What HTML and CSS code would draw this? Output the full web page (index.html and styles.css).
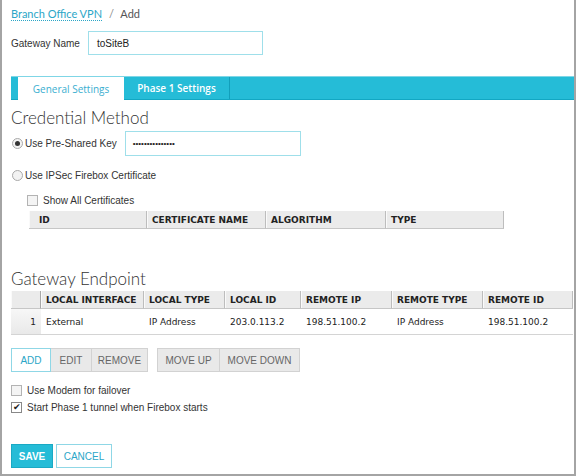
FILE: index.html
```html
<!DOCTYPE html>
<html lang="en">
<head>
    <meta charset="UTF-8">
    <title>Branch Office VPN / Add</title>
    <link rel="stylesheet" href="styles.css">
</head>
<body>
<div class="page">
    <div class="crumbs">
        <a class="crumb-link" href="#">Branch Office VPN</a>
        <span class="crumb-sep">/</span>
        <span>Add</span>
    </div>

    <div class="name-row">
        <span class="label">Gateway Name</span>
        <div class="text-box name-box">toSiteB</div>
    </div>

    <div class="tabs">
        <span class="tab-stub"></span>
        <span class="tab tab-active">General Settings</span>
        <span class="tab">Phase 1 Settings</span>
    </div>

    <h2 class="section-title">Credential Method</h2>

    <div class="radio-row psk-row">
        <span class="radio radio-on"></span>
        <span class="label">Use Pre-Shared Key</span>
        <div class="text-box key-box">•••••••••••••••</div>
    </div>

    <div class="radio-row cert-row">
        <span class="radio"></span>
        <span class="label">Use IPSec Firebox Certificate</span>
    </div>

    <div class="check-row show-certs">
        <span class="check"></span>
        <span class="label">Show All Certificates</span>
    </div>

    <div class="grid cert-grid">
        <div class="th">ID</div>
        <div class="th">CERTIFICATE NAME</div>
        <div class="th">ALGORITHM</div>
        <div class="th">TYPE</div>
    </div>

    <h2 class="section-title endpoint-title">Gateway Endpoint</h2>

    <div class="grid endpoint-grid">
        <div class="th th-blank"></div>
        <div class="th">LOCAL INTERFACE</div>
        <div class="th">LOCAL TYPE</div>
        <div class="th">LOCAL ID</div>
        <div class="th">REMOTE IP</div>
        <div class="th">REMOTE TYPE</div>
        <div class="th">REMOTE ID</div>

        <div class="td td-num">1</div>
        <div class="td">External</div>
        <div class="td">IP Address</div>
        <div class="td">203.0.113.2</div>
        <div class="td">198.51.100.2</div>
        <div class="td">IP Address</div>
        <div class="td">198.51.100.2</div>
    </div>

    <div class="toolbar">
        <div class="btn-group">
            <button class="btn btn-active btn-add">ADD</button>
            <button class="btn btn-edit">EDIT</button>
            <button class="btn btn-remove">REMOVE</button>
        </div>
        <div class="btn-group">
            <button class="btn btn-up">MOVE UP</button>
            <button class="btn btn-down">MOVE DOWN</button>
        </div>
    </div>

    <div class="check-row modem-row">
        <span class="check"></span>
        <span class="label">Use Modem for failover</span>
    </div>
    <div class="check-row start-row">
        <span class="check check-on">&#10004;</span>
        <span class="label">Start Phase 1 tunnel when Firebox starts</span>
    </div>

    <div class="actions">
        <button class="btn-save">SAVE</button>
        <button class="btn-cancel">CANCEL</button>
    </div>
</div>
</body>
</html>
```

FILE: styles.css
```css
/* Page frame */
body {
    margin: 0;
    padding: 0;
    font-family: "Liberation Sans", Arial, sans-serif;
    font-size: 10px;
    color: #333;
    background: #fff;
}

.page {
    width: 576px;
    height: 476px;
    box-sizing: border-box;
    border: 2px solid #a4a4a4;
    border-top: none;
    padding: 6px 0 0 9px;
}

.label {
    font-size: 10px;
    color: #333;
}

/* Breadcrumb */
.crumbs {
    height: 16px;
    line-height: 16px;
    font-family: Lato, "Open Sans", sans-serif;
    font-size: 11px;
    color: #555;
}

.crumb-link {
    color: #2ba6c7;
    text-decoration: none;
    border-bottom: 1px dotted #2ba6c7;
}

.crumb-sep {
    color: #888;
    margin: 0 4px;
}

/* Gateway name */
.name-row {
    display: flex;
    align-items: center;
    margin-top: 9px;
}

.text-box {
    box-sizing: border-box;
    border: 1px solid #9fdfea;
    background: #fff;
    padding: 0 8px;
    display: flex;
    align-items: center;
    font-size: 10px;
    color: #222;
}

.name-box {
    width: 175px;
    height: 24px;
    margin-left: 8px;
}

/* Tabs */
.tabs {
    display: flex;
    height: 24px;
    margin-top: 21px;
    background: #25bcd7;
    border-top: 1px solid #7fd6e6;
    border-bottom: 1px solid #12a7c3;
    box-sizing: border-box;
}

.tab-stub {
    width: 7px;
}

.tab {
    width: 105px;
    display: flex;
    align-items: center;
    justify-content: center;
    font-family: "Open Sans", Lato, sans-serif;
    font-size: 10px;
    font-weight: 600;
    color: #fff;
    border-right: 1px solid #129fbb;
}

.tab-active {
    width: 106px;
    background: #fff;
    color: #3aaed0;
    font-weight: normal;
    margin-bottom: -1px;
    border-right: none;
}

/* Section headings */
.section-title {
    margin: 8px 0 0 0;
    height: 20px;
    line-height: 20px;
    font-family: Lato, "Open Sans", sans-serif;
    font-size: 17px;
    font-weight: 300;
    color: #333;
}

.endpoint-title {
    margin-top: 40px;
}

/* Radios and checkboxes */
.radio-row,
.check-row {
    display: flex;
    align-items: center;
}

.psk-row {
    margin-top: 3px;
    height: 25px;
}

.cert-row {
    margin-top: 11px;
    height: 16px;
}

.radio {
    width: 9px;
    height: 9px;
    border: 1px solid #a9a9a9;
    border-radius: 50%;
    background: #f2f2f2;
    margin: 0 2px 0 1px;
    position: relative;
}

.radio-on::after {
    content: "";
    position: absolute;
    left: 2px;
    top: 2px;
    width: 5px;
    height: 5px;
    border-radius: 50%;
    background: #333;
}

.key-box {
    width: 176px;
    height: 25px;
    margin-left: 8px;
    font-size: 8px;
    padding-left: 7px;
}

.check {
    width: 9px;
    height: 9px;
    border: 1px solid #b3b3b3;
    background: #f4f4f4;
    margin-right: 5px;
    display: flex;
    align-items: center;
    justify-content: center;
    font-size: 9px;
    line-height: 9px;
    color: #222;
}

.check-on {
    background: #fff;
    border-color: #888;
}

.show-certs {
    margin: 9px 0 0 16px;
    height: 16px;
}

.modem-row {
    margin-top: 10px;
    height: 16px;
}

.start-row {
    margin-top: 1px;
    height: 16px;
}

/* Grids */
.grid {
    display: grid;
    font-family: "DejaVu Sans", Verdana, sans-serif;
    font-size: 9px;
    color: #222;
}

.cert-grid {
    grid-template-columns: 118px 119px 120px 118px;
    margin: 3px 0 0 18px;
    width: 475px;
}

.endpoint-grid {
    grid-template-columns: 30px 103px 81px 76px 91px 91px 90px;
    margin-top: 2px;
    width: 562px;
    border-bottom: 1px solid #d4d4d4;
}

.th {
    height: 18px;
    box-sizing: border-box;
    background: #ebebeb;
    border-bottom: 1px solid #c6c6c6;
    border-right: 1px solid #bdbdbd;
    box-shadow: inset 1px 0 0 #fafafa;
    font-weight: bold;
    padding-left: 5px;
    display: flex;
    align-items: center;
    white-space: nowrap;
    overflow: hidden;
}

.cert-grid .th:first-child {
    padding-left: 10px;
}

.th-blank {
    border-right: 1px solid #a8a8a8;
}

.td {
    height: 25px;
    display: flex;
    align-items: center;
    padding-left: 5px;
    white-space: nowrap;
}

.td-num {
    justify-content: flex-end;
    padding: 0 5px 0 0;
    background: linear-gradient(#f7f7f7, #e9e9e9);
}

/* Toolbar buttons */
.toolbar {
    display: flex;
    gap: 9px;
    margin-top: 13px;
}

.btn-group {
    display: flex;
}

.btn {
    height: 24px;
    box-sizing: border-box;
    padding: 0;
    border: 1px solid #d2d2d2;
    background: #e9e9e9;
    color: #666;
    font-family: "Liberation Sans", Arial, sans-serif;
    font-size: 10px;
    margin: 0 0 0 -1px;
}

.btn-group .btn:first-child {
    margin-left: 0;
}

.btn-add { width: 40px; }
.btn-edit { width: 42px; }
.btn-remove { width: 57px; }
.btn-up { width: 63px; }
.btn-down { width: 81px; }

.btn-active {
    background: #fff;
    border-color: #8fd7e6;
    color: #2ba6c7;
    position: relative;
    z-index: 1;
}

/* Save / cancel */
.actions {
    display: flex;
    gap: 3px;
    margin-top: 29px;
}

.btn-save,
.btn-cancel {
    height: 24px;
    box-sizing: border-box;
    font-family: "Liberation Sans", Arial, sans-serif;
    font-size: 10px;
    margin: 0;
}

.btn-save {
    width: 42px;
    background: #25bcd7;
    border: 1px solid #1aa9c4;
    color: #fff;
    font-weight: bold;
}

.btn-cancel {
    width: 56px;
    background: #fff;
    border: 1px solid #8fd7e6;
    color: #2ba6c7;
}
```
